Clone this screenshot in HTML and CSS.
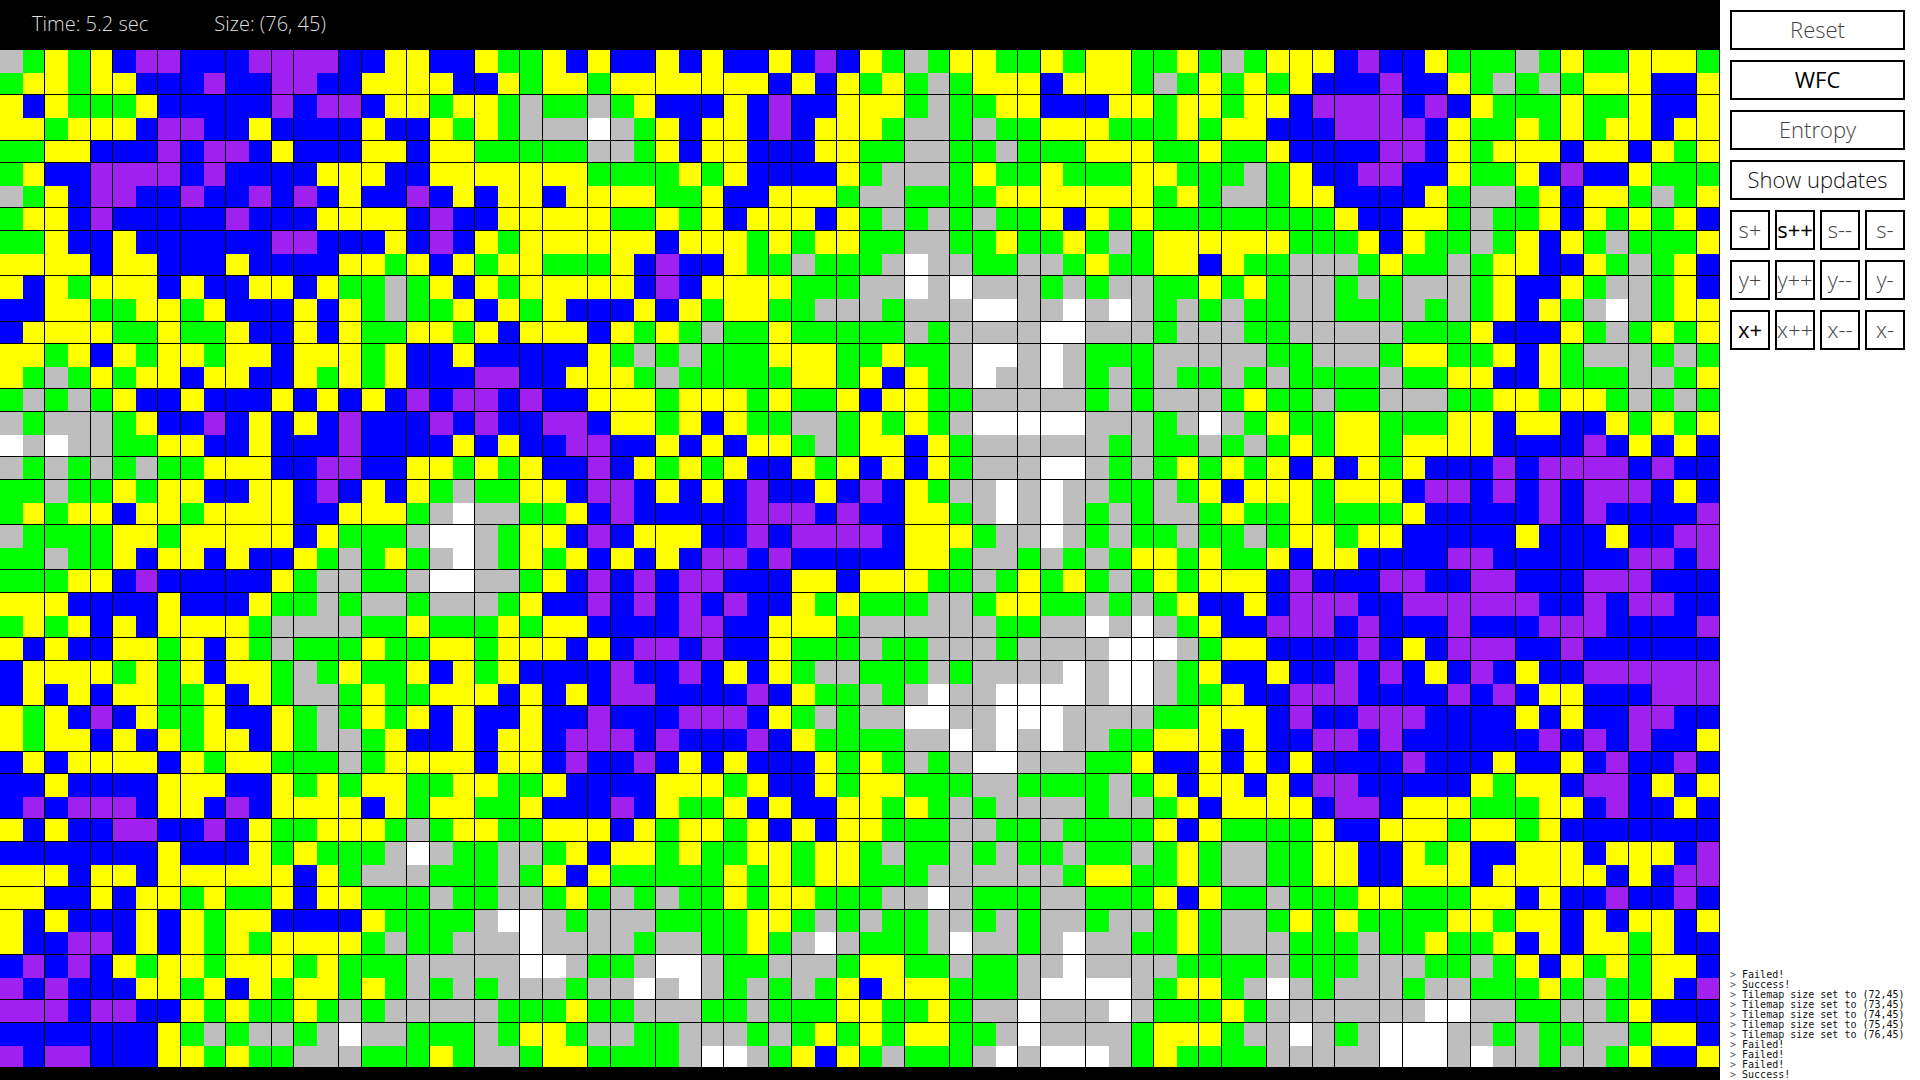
FILE: index.html
```html
<!DOCTYPE html>
<html lang="en">
<head>
    <meta charset="UTF-8">
    <title>WFC tilemap</title>
    <link rel="stylesheet" href="styles.css">
</head>
<body>
    <div id="view">
        <div id="stats">
            <span>Time: 5.2 sec</span>
            <span>Size: (76, 45)</span>
        </div>
        <div id="map"></div>
    </div>
    <div id="side">
        <div class="btn">Reset</div>
        <div class="btn on">WFC</div>
        <div class="btn">Entropy</div>
        <div class="btn half">Show updates</div>
        <div class="btn-row">
            <div class="btn small">s+</div>
            <div class="btn small on">s++</div>
            <div class="btn small">s--</div>
            <div class="btn small">s-</div>
        </div>
        <div class="btn-row">
            <div class="btn small">y+</div>
            <div class="btn small">y++</div>
            <div class="btn small">y--</div>
            <div class="btn small">y-</div>
        </div>
        <div class="btn-row">
            <div class="btn small on">x+</div>
            <div class="btn small">x++</div>
            <div class="btn small">x--</div>
            <div class="btn small">x-</div>
        </div>
        <ul id="log">
            <li>Failed!</li>
            <li>Success!</li>
            <li>Tilemap size set to (72,45)</li>
            <li>Tilemap size set to (73,45)</li>
            <li>Tilemap size set to (74,45)</li>
            <li>Tilemap size set to (75,45)</li>
            <li>Tilemap size set to (76,45)</li>
            <li>Failed!</li>
            <li>Failed!</li>
            <li>Failed!</li>
            <li>Success!</li>
        </ul>
    </div>
    <script src="map.js"></script>
</body>
</html>
```
FILE: styles.css
```css
*{
    margin: 0;
    padding: 0;
    box-sizing: border-box;
}
li{
    list-style: none;
}

body{
    display: flex;
    width: 1920px;
    height: 1080px;
    overflow: hidden;
    background: #fff;
    font-family: "Open Sans", "Noto Sans", sans-serif;
}

#view{
    width: 1720px;
    height: 1080px;
    background: #000;
}

#stats{
    display: flex;
    gap: 66px;
    height: 50px;
    padding: 10px 0 0 32px;
    color: #ddd;
    font-size: 20px;
    font-weight: 300;
    line-height: 28px;
}

#map{
    position: relative;
    display: grid;
    grid-template-columns: repeat(76, 22.63px);
    grid-auto-rows: 22.63px;
    width: 1720px;
}

.Y{ background: #ff0; }
.G{ background: #0f0; }
.B{ background: #00f; }
.P{ background: #a020f0; }
.S{ background: #bebebe; }
.W{ background: #fff; }

/* black chunk lines over the tiles */
.vline,.hline{
    position: absolute;
    background: #000;
}
.vline{
    top: 0;
    bottom: 0;
    width: 1px;
}
.hline{
    left: 0;
    right: 0;
    height: 1px;
}

#side{
    display: flex;
    flex-direction: column;
    gap: 10px;
    width: 200px;
    height: 1080px;
    padding: 10px 15px 0 10px;
}

.btn{
    display: flex;
    align-items: center;
    justify-content: center;
    height: 40px;
    padding-bottom: 3px;
    border: 2px solid #000;
    color: #444;
    font-size: 22px;
    font-weight: 300;
    white-space: nowrap;
}
.btn.half{
    color: #111;
}
.btn.on{
    color: #000;
    font-weight: 500;
}
.btn.small{
    width: 40px;
    overflow: hidden;
}
.btn-row{
    display: flex;
    gap: 5px;
}

#log{
    margin-top: auto;
    height: 110px;
    font-family: "DejaVu Sans Mono", monospace;
    font-size: 10px;
    line-height: 10px;
    color: #111;
    white-space: nowrap;
}
#log li::before{
    content: "> ";
    color: #555;
}
```
FILE: map.js
```js
// one row per line, four groups of 19 tiles
var aRows=[
'SGYGYBPPBBBPPPPBBYY BBYGGYBYBBYBYBBYBPB YGSGYYGGYGYYGGYGSGY YYBPBBYGGGSGYGGYYYG',
'GYYGYYBBBPBBPPBBYYY YBBYGYYGYYYYYYYBYBY GYGSGYYYBYYYGSGYGYG YBBBPBBYGSGSGYYYBBY',
'YBYGGGYBBBBBPBPPBYY GYYGSGGSGYBBBYBPBBY YYGSGGYYBBBYYGYYGYY BPPPPBPBYGGGYGGYBBY',
'YYGYYYBPPBBYBBBBYBB YGYGSSSWSGYBYYBPBYY YGSSGSGGYYYGGGYGYYB BBPPPPBYGGYGYGYYBYY',
'GGYYBBBPBPPBYBBBYYB YYGGGGGSSGYBYYBBBYY GGSSGGSGGGYYYGGYGGY BBBBPPBYGYYYBYYBYGY',
'GYBBPPPPBPBBBBYYYBB YYYYYYYGGGGYGYBBBBY GSSSGYGGYGGGYYGGGSG YBBPPBBYGGYBPBBYGGG',
'SGYBPPBBPBBPBPBYBBP BYBYYBYYYYGGYBBYYYG SSGGGGYYYYYYYGYGSSG YYBBBBYGSSGYBYYGSGY',
'GYYBPBBBBBPBBBYYYYB PBBYYYYYGGYGYBYYYBY GSGSGSGGYBYGYGGGGGG GGYBBYYGSGGYBYGYGYB',
'GGYBBYBBBBBBPPBBBYB PBYGYYYYYYBYYYGYGYY GGSSGGYGGYGSGYYYYYY GGGYBYGGSGYBYGSGGGY',
'YYYYBYYBBBYBBBBYYGY BYGYYGGGYBPBBYGGSGG GSWSSGGSSGYGGYYBYGG SSSGYGGSGYYBBYGSGYB',
'YBYGYYYBYBBYYBYGGSG YBYGYYYYYBPBYYYYGGG SSWSWSSSGSGSSGGYGYG SSGSGSSSGYBBYGSSGYB',
'BBYYGGYYGYBBBYBYGSG GYBYGYBBBYBYGYYGGSS SGSSSWWSSWSWSGSGSGG SSGGGSGSGYBYGSWSGYY',
'BYYYYGGYGGYBBYBYGGY YGYBYYYBYGYGSGGYGGG GGSGSSSSWWSSSGSSSGG SSSSSGGGYBBBYGSGYGY',
'YYGYBYGYYGYYBYYYGYB BYBBBBBYGSGSGGGYYYG GYGGSWWSWSGGGSSSSSG GSSSGYYGGYBYGSSSGSG',
'YGSGYGYYBYYBBYGYGYB BBPPBBYYYGSGGGGGYYG YBYGSWSSWSGSGSGGSGS GGGGSGGYYBBYGGGSSGY',
'GSGSGYBBYBBBYBYBYBP BPPBPBBYYYGYYYGYGGY BYYGGSSSSSGSGSSSGYG GSGGSSSGGYYGYYGSGSG',
'SGSSSGYBBPBYBYBPBBB PBPBBPPBYYGYBYGGSSG YGYGSWWWWWSSSGSWSGY GGYYGGGYYBYYBBYGYGY',
'WSWSSGGYYBBYBBBPBBB BYBYBBPPBBYBYBYYGSG YYBYGSSSSSSGSGGSGSG YGYYGYYYYBBBBPBYBYB',
'SGSGSGSGGYYYBBPPBBY YGYGYBBPBYGYGYBBYGY BYBYGSSSWWSGSGYGYGY BYBYGYBBBPBPPPPBPBB',
'GGSGGYGYYBBYYBPBYBY GSGGYYBPPBYBYBPBBYB PBYGSSWSWSSGGSGYBYY YGYYYBPPBPBPBPPPBYB',
'GYGYYBYYGYYYYBBYYYG SWSSGGYBPBBBBBPPPBP BBYYGSWSWSGSGSSGYGG YGGGGYBBBBBPBPBBBBP',
'SGGGGYYGYYYYYBYGGGS WWSGYYBPBYYYBBPBPPP PBYYYGSSWSGSGGSGGSG YYGYYBBBBBYBBBYBBPP',
'GGSGGYBYYBYBBYGSGYG SWSGYGYBYBYBPPBPBBB BBYYGSSGSGSGYYGYGGY BYYBBBBPPBBBBBBPPBP',
'GGGYYBPBBBBBYGSSGGS WWSSGYBPBPBPPBBBYYB YYYGGSGYGYGSGYGYYYB PBBBPPBBPPBBBPPPBBB',
'YYYBBBBYBBBYGGSGSSG SSSGYBBPBPBPBPBBYGY GGGSSGYYGGSGSGYBBYB PPPBBPPPPPPBBPBPPBB',
'GYGYBYBYYYYGSSSSGGY GGGYGYYBBBBPPBBYYYG SSSSSSGGSSWSWSGYBBP PPBPBBBPBBBPPPBBBBP',
'YBYBBYYGYBYGSGGGYGG YYGYYYBYBPPBPBBYGGG SGGSSSGSSSSWWWSGYYB BBBPBYBPPPBBPBBBBBB',
'BYYYYGYGYBYYGSGYGGY BYGYBBBBPBBPBYBYGSS GGGSGSSSSWSWWSGYBBY BBPBPBYBPBYBBPPPPPP',
'BYBYBYYGGYBYGSSGYGG YYYBYBYBPPBBBBPBYGG SGSWSSWWWWSWWSGGYBB PPPBBBBPBPBYYBBBPPP',
'YGYBPBYGGYBBYGSGYGY BYBBYBBPBBBPPPBYGSG SSWWSSWWWSSSSGGYYYB PBBPPPBBBBYBYBBPPBB',
'YGYYBYBYGYYBYGSSGYB BYBYYBPPPBPBBBPBYGG GGSSWSWSWSSGGYYYBYB BPPBPBBBBBBPBPBPBBY',
'BYBYYYYBYGYYGGGSGYY YYBYYBPBBPBYBYBBBYG YGSGSWWSSSGGYBBYBYB YBBBBPBBBYBBYBPBBPB',
'BBYBBBBYYYBBYGYGYYG GYYGGYBBBBYYYGYBBYG YYGGGSSGGGGSGYBYYBY BPPBBBBBYGYYBPPBYBY',
'BPBPPPBYYBPBYYYYBYG YYGGYBBBPBYGGYBYBBY YGYGSGSSSSGSSGYBYYY YBPPBYYYGGGYYBPBBYB',
'YBYBBPPBBPBYGGYYYGS GYYGGYYYBYGYYGYBYBY YGGGSSGGSGGGGYBYGGG GYBBYYYGYYGYBBBBBBB',
'BBBBBBBYBBBYGYGGGSW SGGSSGYBYYGYGGYYGYY GSGGSGSGGSGGSGYGSSG GYYBBYGYBBYYYBYYYBP',
'YYYBYYBYYYYYYBYGSSS GGGSGYBYGGGGGYGYGYY GGGSSSSSSGYYGGYGSSG GYYBBYYYBYYYYYBYBPP',
'YYBBYBYYGYGGYBYYGGG SGGSSGYGSGSGGYGYYGG GSSWSGGGSSGGGYBYGGS GGGYYGGGYYBYBBPBBPB',
'YBYBBBYBYGYYBBBBYGG GGSWWSGSSSGGGGYYGSG SGGSSGSGSSGSSGYGSSG YGYGGGGYYGYYBYBYYBY',
'YBBPPBYBYGYGYYYYGSG GSSSWSSSSGSSGGYGSWS GGGSWSSGSWSSGGYGSSS GGGSGGYGGYBYBYYGYBB',
'BPBPBYGYYGYYYGYGGGS SSSSWWSGGSWWSGGSSSG YYGGSGGSSWSSSSGGGGS GGGSSSGGSGYBYGYGYYB',
'PBPBBBYYGYBYGYYGYGS GSGSSSGSSWSWSGSGSGY BYYYGGGSWWWWSGYYGSW SGSSSGSSGGGYGSGGYBP',
'PPPBPPBBYGYGGYGSGSS SSSGGGYGGSSSGGSGGGY YGGYGSSWSSSWSGGGYGS SSSSSSWWSSGGSSGYBBB',
'BBBBBBBYGSGSSGSWSSG GGSGYYGSSGGSSSGSGYG YGYYGGSWSSSSGYYYGSS WSGSWWWSSGSGGSSGYYB',
'PBPPBBBYYGYGGSSSGGG YGSSGYYGGGGSWWSGYBY GSGGGSWSWWWSGYGGGGS SSSSWWWSWSSGSSGYBBY'
];
var iTile=22.63;
// column and row indexes that have a black line on their left/top edge
var aCols=[2,4,5,7,8,10,12,13,15,16,18,19,21,23,24,26,27,29,31,32,34,35,37,38,40,42,43,45,46,48,50,51,53,54,56,57,58,59,61,62,64,65,67,69,70,72,73,75,76];
var aLines=[2,4,5,7,8,10,12,13,15,16,18,19,21,23,24,26,27,29,31,32,34,35,37,38,40,42,43,45];
var oMap=document.getElementById('map');

for(var i=0;i<aRows.length;i++){
    var sRow=aRows[i].replace(/ /g,'');
    for(var j=0;j<sRow.length;j++){
        var oCell=document.createElement('div');
        oCell.className=sRow.charAt(j);
        oMap.appendChild(oCell);
    }
}

function addLine(className,prop,index){
    var oLine=document.createElement('div');
    oLine.className=className;
    oLine.style[prop]=(Math.round(index*iTile)-1)+'px';
    oMap.appendChild(oLine);
}
for(var i=0;i<aCols.length;i++){
    addLine('vline','left',aCols[i]);
}
for(var i=0;i<aLines.length;i++){
    addLine('hline','top',aLines[i]);
}
```
